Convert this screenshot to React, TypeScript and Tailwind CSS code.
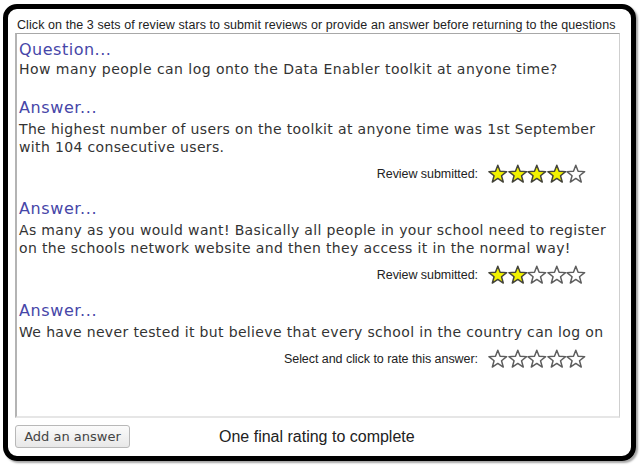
import React from "react";

const STAR =
  "10,1 12.35,7.26 19.04,7.56 13.8,11.74 15.58,18.19 10,14.5 4.42,18.19 6.2,11.74 0.96,7.56 7.65,7.26";

function Star({ filled }: { filled: boolean }) {
  return (
    <svg width="19.6" height="20" viewBox="0 0 20 20" className="block">
      <polygon
        points={STAR}
        fill={filled ? "#f2f200" : "#ffffff"}
        stroke={filled ? "#44443a" : "#5e5e5e"}
        strokeWidth="1.5"
        strokeLinejoin="round"
      />
    </svg>
  );
}

function Rating({ label, value }: { label: string; value: number }) {
  return (
    <div className="flex h-[20px] items-center justify-end pr-[33px]">
      <span className="mr-[10px] font-['Liberation_Sans',sans-serif] text-[12.5px] leading-[14px] tracking-[-0.05px] text-[#222]">
        {label}
      </span>
      <div className="flex">
        {[1, 2, 3, 4, 5].map((i) => (
          <Star key={i} filled={i <= value} />
        ))}
      </div>
    </div>
  );
}

function Answer({
  lines,
  rating,
  className,
}: {
  lines: string[];
  rating: { label: string; value: number };
  className?: string;
}) {
  return (
    <div className={className}>
      <div className="h-[20px] text-[16px] leading-[20px] tracking-[0.6px] text-[#4646a8]">Answer...</div>
      <div className="mt-[2px] text-[14px] leading-[18px] tracking-[0.35px] text-[#333]">
        {lines.map((l, i) => (
          <div key={i} className="whitespace-nowrap">
            {l}
          </div>
        ))}
      </div>
      <div className="mt-[8px]">
        <Rating label={rating.label} value={rating.value} />
      </div>
    </div>
  );
}

export default function App() {
  return (
    <div className="h-[466px] w-[640px] overflow-hidden bg-white pl-[3px] pt-[4px]">
      <div className="flex h-[457px] w-[633px] flex-col rounded-[14px] border-[5px] border-black pl-[7px] pr-[11px] shadow-[2px_2px_2px_rgba(0,0,0,0.35)]">
        <div className="h-[24px] pt-[10px] pl-[2px] font-['Liberation_Sans',sans-serif] text-[12.5px] leading-[13px] tracking-[0.08px] whitespace-nowrap text-[#222]">
          Click on the 3 sets of review stars to submit reviews or provide an answer before returning to the questions
        </div>
        <div className="h-[385px] border-t border-r border-b-2 border-l-2 border-t-[#a8a8a8] border-r-[#cfcfcf] border-b-[#e6e6e6] border-l-[#b4b4b4] bg-white pt-[6px] pl-[2px] font-['DejaVu_Sans',sans-serif]">
          <div className="h-[20px] text-[16px] leading-[20px] tracking-[0.5px] text-[#4646a8]">Question...</div>
          <div className="text-[14px] leading-[18px] tracking-[0.45px] whitespace-nowrap text-[#333]">
            How many people can log onto the Data Enabler toolkit at anyone time?
          </div>
          <Answer
            className="mt-[20px]"
            lines={[
              "The highest number of users on the toolkit at anyone time was 1st September",
              "with 104 consecutive users.",
            ]}
            rating={{ label: "Review submitted:", value: 4 }}
          />
          <Answer
            className="mt-[15px]"
            lines={[
              "As many as you would want! Basically all people in your school need to register",
              "on the schools network website and then they access it in the normal way!",
            ]}
            rating={{ label: "Review submitted:", value: 2 }}
          />
          <Answer
            className="mt-[16px]"
            lines={["We have never tested it but believe that every school in the country can log on"]}
            rating={{ label: "Select and click to rate this answer:", value: 0 }}
          />
        </div>
        <div className="mt-[7px] flex items-center">
          <button
            type="button"
            className="h-[23px] w-[115px] rounded-[3px] border border-[#b8b8b8] bg-gradient-to-b from-[#fbfbfb] to-[#e8e8e8] font-['DejaVu_Sans',sans-serif] text-[13px] leading-[20px] text-[#444]"
          >
            Add an answer
          </button>
          <span className="ml-[89px] font-['Liberation_Sans',sans-serif] text-[16px] leading-[18px] text-[#222]">
            One final rating to complete
          </span>
        </div>
      </div>
    </div>
  );
}
